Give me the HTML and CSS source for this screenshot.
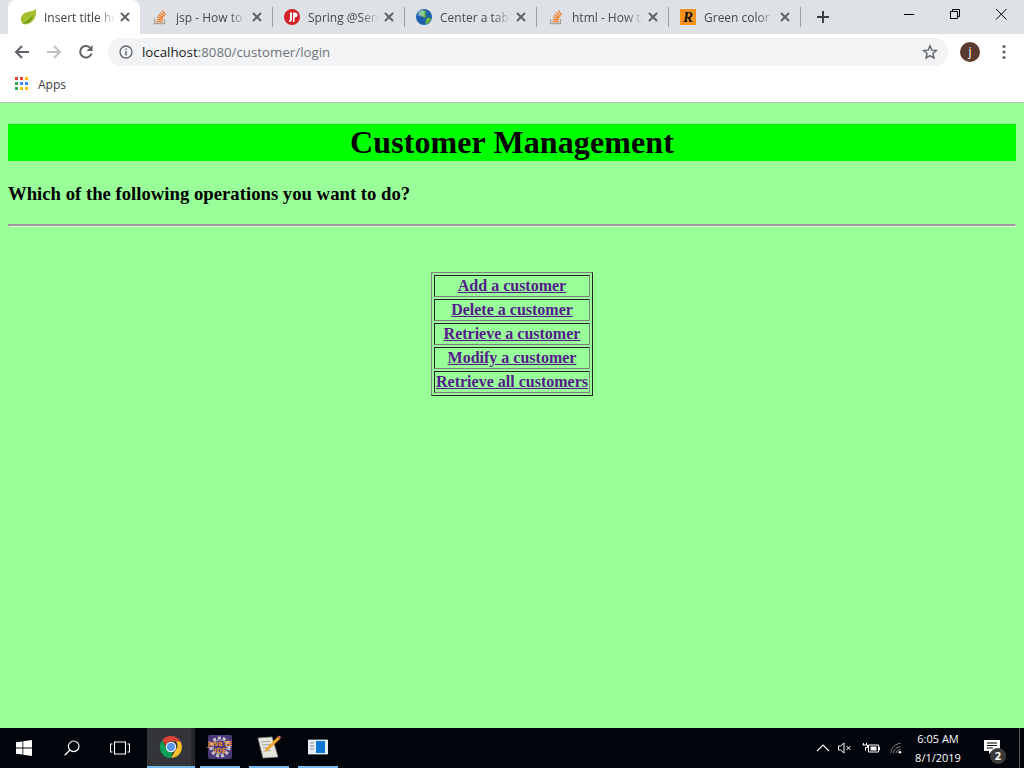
FILE: index.html
```html
<!DOCTYPE html>
<html lang="en">
<head>
    <meta charset="UTF-8">
    <title>Customer Management</title>
    <link rel="stylesheet" href="styles.css">
</head>
<body>
    <div class="window">
        <!-- Tab strip -->
        <div class="tabstrip">
            <div class="tab active">
                <svg class="favicon" viewBox="0 0 16 16"><path d="M3 15C0 12 0 7 4 4.500 8 2 13 3 16 0c.5 6-1 11-5 13.500C8 15.500 5 16 3 15z" fill="#a4c02c"/><path d="M3 14.500C6 12.500 9 11 13 6c-1 5-3 7-5 8-2 .8-3.500 1-5 .5z" fill="#6f9a1e"/></svg>
                <span class="tab-title">Insert title here</span>
                <svg class="tab-close" viewBox="0 0 12 12"><path d="M2 2l8 8M10 2l-8 8" stroke="#5f6368" stroke-width="2"/></svg>
            </div>
            <div class="tab">
                <svg class="favicon" viewBox="0 0 16 16"><path d="M2.500 10v4.500h10V10" fill="none" stroke="#a8a29a" stroke-width="1.300"/><path d="M4.500 12.500h6M4.700 10.300l6 .5M5.200 8l5.800 1.500M6.300 5.700l5.300 2.700M8 3.500l4.600 3.800M10.300 1.500l3.300 4.600" stroke="#ef8236" stroke-width="1.300"/></svg>
                <span class="tab-title">jsp - How to center</span>
                <svg class="tab-close" viewBox="0 0 12 12"><path d="M2 2l8 8M10 2l-8 8" stroke="#5f6368" stroke-width="2"/></svg>
            </div>
            <div class="tab">
                <svg class="favicon" viewBox="0 0 16 16"><circle cx="8" cy="8" r="8" fill="#d3232a"/><path d="M6 3.500h2v7c0 1.500-1 2.500-3 2.500v-1.700c.7 0 1-.3 1-1zM9 3.500h1.500c2 0 3 1 3 2.500s-1 2.500-3 2.500V13H9z" fill="#fff"/></svg>
                <span class="tab-title">Spring @Service</span>
                <svg class="tab-close" viewBox="0 0 12 12"><path d="M2 2l8 8M10 2l-8 8" stroke="#5f6368" stroke-width="2"/></svg>
            </div>
            <div class="tab">
                <svg class="favicon" viewBox="0 0 16 16"><circle cx="8" cy="8" r="8" fill="#1d5fa8"/><path d="M4 2.500c2-1.500 5-1.500 6 0 .5 1-1 1.500-1 2.500s1.500 1 1 2.500-2.500 1-3.500 0S3 6 3.500 4.500zM11 9c1.500-.5 3.500 0 4 1-.5 2.500-3 4.500-5 5-1-1-.5-2.500 0-3.500s0-2 1-2.500z" fill="#6fbb3c"/><circle cx="5" cy="4" r="3.500" fill="#bfe3f5" opacity=".45"/></svg>
                <span class="tab-title">Center a table</span>
                <svg class="tab-close" viewBox="0 0 12 12"><path d="M2 2l8 8M10 2l-8 8" stroke="#5f6368" stroke-width="2"/></svg>
            </div>
            <div class="tab">
                <svg class="favicon" viewBox="0 0 16 16"><path d="M2.500 10v4.500h10V10" fill="none" stroke="#a8a29a" stroke-width="1.300"/><path d="M4.500 12.500h6M4.700 10.300l6 .5M5.200 8l5.800 1.500M6.300 5.700l5.300 2.700M8 3.500l4.600 3.800M10.300 1.500l3.300 4.600" stroke="#ef8236" stroke-width="1.300"/></svg>
                <span class="tab-title">html - How to</span>
                <svg class="tab-close" viewBox="0 0 12 12"><path d="M2 2l8 8M10 2l-8 8" stroke="#5f6368" stroke-width="2"/></svg>
            </div>
            <div class="tab">
                <span class="favicon r-icon">R</span>
                <span class="tab-title">Green color codes</span>
                <svg class="tab-close" viewBox="0 0 12 12"><path d="M2 2l8 8M10 2l-8 8" stroke="#5f6368" stroke-width="2"/></svg>
            </div>
            <svg class="new-tab" viewBox="0 0 14 14"><path d="M7 1v12M1 7h12" stroke="#3c4043" stroke-width="2"/></svg>
            <div class="window-buttons">
                <svg class="win-btn" viewBox="0 0 46 20"><path d="M18 10.500h10" stroke="#000"/></svg>
                <svg class="win-btn" viewBox="0 0 46 20"><path d="M18.500 7.500h7v7h-7zM20.500 7.500v-2h7v7h-2" fill="none" stroke="#000"/></svg>
                <svg class="win-btn" viewBox="0 0 46 20"><path d="M18 5l10.500 10.500M28.500 5L18 15.500" stroke="#000"/></svg>
            </div>
        </div>

        <!-- Address bar -->
        <div class="toolbar">
            <svg class="nav-icon" viewBox="0 0 16 16"><path d="M15 8H2M8 2L2 8l6 6" fill="none" stroke="#5f6368" stroke-width="2"/></svg>
            <svg class="nav-icon" viewBox="0 0 16 16"><path d="M1 8h13M8 2l6 6-6 6" fill="none" stroke="#bdc1c6" stroke-width="2"/></svg>
            <svg class="nav-icon" viewBox="0 0 16 16"><path d="M13.500 9.500A5.800 5.800 0 1 1 12 3.600" fill="none" stroke="#5f6368" stroke-width="2"/><path d="M14.500 1v6h-6z" fill="#5f6368"/></svg>
            <div class="omnibox">
                <svg class="info-icon" viewBox="0 0 14 14"><circle cx="7" cy="7" r="6" fill="none" stroke="#5f6368" stroke-width="1.300"/><path d="M7 6v4.500M7 3.500v1.500" stroke="#5f6368" stroke-width="1.400"/></svg>
                <span class="url"><span class="url-host">localhost</span>:8080/customer/login</span>
                <svg class="star-icon" viewBox="0 0 16 16"><path d="M8 1.800l1.800 4.300 4.600.4-3.500 3 1.100 4.500L8 11.600 4 14l1.100-4.500-3.500-3 4.600-.4z" fill="none" stroke="#5f6368" stroke-width="1.400"/></svg>
            </div>
            <span class="avatar">j</span>
            <svg class="menu-icon" viewBox="0 0 4 16"><circle cx="2" cy="2.500" r="1.600" fill="#5f6368"/><circle cx="2" cy="8" r="1.600" fill="#5f6368"/><circle cx="2" cy="13.500" r="1.600" fill="#5f6368"/></svg>
        </div>

        <!-- Bookmarks -->
        <div class="bookmarks">
            <svg class="apps-icon" viewBox="0 0 14 14">
                <rect x="0" y="0" width="3" height="3" fill="#ea4335"/><rect x="5" y="0" width="3" height="3" fill="#ea4335"/><rect x="10" y="0" width="3" height="3" fill="#fbbc04"/>
                <rect x="0" y="5" width="3" height="3" fill="#34a853"/><rect x="5" y="5" width="3" height="3" fill="#4285f4"/><rect x="10" y="5" width="3" height="3" fill="#4285f4"/>
                <rect x="0" y="10" width="3" height="3" fill="#34a853"/><rect x="5" y="10" width="3" height="3" fill="#fbbc04"/><rect x="10" y="10" width="3" height="3" fill="#fbbc04"/>
            </svg>
            <span>Apps</span>
        </div>

        <!-- Page -->
        <div class="page">
            <h1>Customer Management</h1>
            <h3>Which of the following operations you want to do?</h3>
            <hr>
            <table class="menu">
                <tr><th><a href="#">Add a customer</a></th></tr>
                <tr><th><a href="#">Delete a customer</a></th></tr>
                <tr><th><a href="#">Retrieve a customer</a></th></tr>
                <tr><th><a href="#">Modify a customer</a></th></tr>
                <tr><th><a href="#">Retrieve all customers</a></th></tr>
            </table>
        </div>

        <!-- Taskbar -->
        <div class="taskbar">
            <svg class="start" viewBox="0 0 16 16"><path d="M0 2.300L6.500 1.400V7.600H0zM7.300 1.300L16 0V7.600H7.300zM0 8.400H6.500V14.600L0 13.700zM7.300 8.400H16V16L7.300 14.700z" fill="#fff"/></svg>
            <svg class="search" viewBox="0 0 16 16"><circle cx="9.700" cy="6.300" r="5.300" fill="none" stroke="#fff" stroke-width="1.200"/><path d="M6 10L.7 15.300" stroke="#fff" stroke-width="1.300"/></svg>
            <svg class="taskview" viewBox="0 0 20 14"><path d="M4.500 1h11v12h-11zM2.500 3H.5v8h2M17.500 3h2v8h-2" fill="none" stroke="#fff" stroke-width="1.100"/></svg>
            <div class="task task-active">
                <svg class="task-icon" viewBox="0 0 24 24">
                    <path d="M12 1a11 11 0 0 1 9.500 5.500H12a5.500 5.500 0 0 0-5.200 3.700L3.100 5.300A11 11 0 0 1 12 1z" fill="#db4437"/>
                    <path d="M21.500 6.500A11 11 0 0 1 12 23l4.700-8.300a5.500 5.500 0 0 0 0-8.200z" fill="#fbc02d"/>
                    <path d="M12 23A11 11 0 0 1 3.100 5.300L7.800 14a5.500 5.500 0 0 0 6 3.300z" fill="#0f9d58"/>
                    <circle cx="12" cy="12" r="5.200" fill="#fff"/><circle cx="12" cy="12" r="4.200" fill="#5a95ee"/>
                </svg>
            </div>
            <div class="task">
                <div class="eclipse-icon">
                    <svg class="eclipse-gear" viewBox="0 0 24 24"><circle cx="12" cy="12" r="9" fill="none" stroke="#c9c6cf" stroke-width="3" stroke-dasharray="3 2"/><circle cx="12" cy="12" r="7" fill="none" stroke="#a9a5b3"/></svg>
                    <span class="eclipse-label">Java EE</span>
                    <span class="eclipse-label">IDE</span>
                </div>
            </div>
            <div class="task">
                <svg class="task-icon" viewBox="0 0 24 24"><path d="M1 3l14-1 6 20-15 1z" fill="#e6e6e0" stroke="#8f8f88" stroke-width=".8"/><path d="M4 7l9-.6M5 10l8-.6M6 13l6-.5M6.500 16l7-.5" stroke="#a5a59c"/><path d="M8 17l2.500-1.200L23 4l-2-2.500L9 13.500z" fill="#f3a32c"/><path d="M21 1.500l2 2.500 1-1.500-1.500-2z" fill="#d9705f"/></svg>
            </div>
            <div class="task">
                <svg class="task-icon" viewBox="0 0 24 24"><rect x="2" y="4" width="20" height="16" fill="#e8edf2"/><path d="M2 4.500h20M2 19.500h20" stroke="#56606a"/><rect x="10" y="6" width="9" height="12" fill="#0f78d4"/><path d="M4 8h4M4 11h4M4 14h4" stroke="#9fb0bf" stroke-width="1.300"/></svg>
            </div>
            <div class="tray">
                <svg class="tray-icon" viewBox="0 0 14 8"><path d="M1 7l6-6 6 6" fill="none" stroke="#fff" stroke-width="1.100"/></svg>
                <svg class="tray-icon" viewBox="0 0 14 12"><path d="M.5 4h2L6 1v10L2.500 8h-2zM8.500 4l4 4M12.500 4l-4 4" fill="none" stroke="#fff"/></svg>
                <svg class="tray-icon tray-battery" viewBox="0 0 17 12"><path d="M6 3h10v7H6zM16 5h1v3h-1" fill="none" stroke="#fff"/><rect x="8" y="4.500" width="6" height="4" fill="#fff"/><path d="M1 1v2M4 1v2M0 3h5v2.500H3v3" fill="none" stroke="#fff"/></svg>
                <svg class="tray-icon" viewBox="0 0 14 14"><path d="M1 13C1.500 7 6 2 12.500 1.500M4 13c.5-4 3.500-7 8.500-7.500M7 13c.3-2 2-4 5.500-4.300" fill="none" stroke="#9a9a9a"/><circle cx="11.500" cy="12" r="1.500" fill="#fff"/></svg>
                <div class="clock"><span>6:05 AM</span><span>8/1/2019</span></div>
                <div class="notify">
                    <svg class="notify-icon" viewBox="0 0 16 14"><path d="M0 0h16v11H8l-3 3v-3H0z" fill="#fff"/><path d="M3 3h10M3 5.500h10M3 8h6" stroke="#000"/></svg>
                    <span class="badge">2</span>
                </div>
                <span class="show-desktop"></span>
            </div>
        </div>
    </div>
</body>
</html>
```

FILE: styles.css
```css
html, body {
    margin: 0;
    height: 100%;
}
body {
    font-family: "Open Sans", "Noto Sans", sans-serif;
    overflow: hidden;
}
.window {
    display: flex;
    flex-direction: column;
    height: 768px;
}

/* tabs */
.tabstrip {
    display: flex;
    align-items: center;
    height: 34px;
    padding-left: 8px;
    background-color: #dee1e6;
    flex: none;
}
.tab {
    position: relative;
    display: flex;
    align-items: center;
    width: 132px;
    height: 34px;
    padding-left: 12px;
    box-sizing: border-box;
    font-size: 12px;
    color: #45494d;
}
.tab::after {
    content: "";
    position: absolute;
    right: -1px;
    top: 7px;
    height: 20px;
    width: 1px;
    background-color: #9aa0a6;
}
.tab.active {
    background-color: #fff;
    border-radius: 8px 8px 0 0;
    color: #3c4043;
}
.tab.active::after {
    display: none;
}
.favicon {
    width: 16px;
    height: 16px;
    flex: none;
}
.r-icon {
    background-color: #f7931e;
    color: #111;
    font: italic bold 15px/16px "Liberation Serif", serif;
    text-align: center;
}
.tab-title {
    width: 71px;
    margin-left: 8px;
    overflow: hidden;
    white-space: nowrap;
    -webkit-mask-image: linear-gradient(to right, #000 75%, transparent 100%);
    mask-image: linear-gradient(to right, #000 75%, transparent 100%);
}
.tab-close {
    width: 12px;
    height: 12px;
    margin-left: 4px;
    flex: none;
}
.new-tab {
    width: 14px;
    height: 14px;
    margin-left: 16px;
}
.window-buttons {
    display: flex;
    margin-left: auto;
    align-self: flex-start;
    padding-top: 4px;
}
.win-btn {
    width: 46px;
    height: 20px;
}

/* address bar */
.toolbar {
    display: flex;
    align-items: center;
    height: 34px;
    padding: 2px 0 0 14px;
    box-sizing: border-box;
    flex: none;
}
.nav-icon {
    width: 16px;
    height: 16px;
    margin-right: 16px;
}
.omnibox {
    display: flex;
    align-items: center;
    width: 840px;
    height: 28px;
    margin-left: -2px;
    padding: 0 10px 0 11px;
    box-sizing: border-box;
    border-radius: 14px;
    background-color: #f1f3f4;
}
.info-icon {
    width: 14px;
    height: 14px;
}
.url {
    margin-left: 9px;
    font-size: 13.3px;
    color: #70757a;
}
.url-host {
    color: #202124;
}
.star-icon {
    width: 16px;
    height: 16px;
    margin-left: auto;
}
.avatar {
    width: 20px;
    height: 20px;
    margin-left: 12px;
    border-radius: 50%;
    background-color: #5b3a30;
    color: #fff;
    font-size: 12px;
    line-height: 19px;
    text-align: center;
}
.menu-icon {
    width: 4px;
    height: 16px;
    margin-left: 22px;
}

/* bookmarks */
.bookmarks {
    display: flex;
    align-items: center;
    height: 35px;
    padding: 0 0 2px 15px;
    box-sizing: border-box;
    border-bottom: 1px solid #b8b6b8;
    font-size: 12px;
    color: #3c4043;
    flex: none;
}
.apps-icon {
    width: 14px;
    height: 14px;
    margin-right: 9px;
}

/* page */
.page {
    flex: 1;
    padding: 8px;
    background-color: #9f9;
    color: #000;
    font-family: "Liberation Serif", serif;
}
h1 {
    margin: 13px 0 0;
    background-color: #0f0;
    text-align: center;
    letter-spacing: .1px;
}
h3 {
    margin: 22px 0 19px;
}
hr {
    height: 0;
    margin: 0 0 45px;
    border-style: solid;
    border-width: 2px 1px 1px;
    border-color: #9a9a9a #eee #eee #9a9a9a;
}
.menu {
    margin: 0 auto;
    border: 1px solid;
    border-color: #808080 #222 #222 #808080;
    border-spacing: 2px;
}
.menu th {
    padding: 1px;
    border: 1px solid;
    border-color: #222 #808080 #808080 #222;
}
.menu a {
    color: #551a8b;
}

/* taskbar */
.taskbar {
    display: flex;
    align-items: center;
    height: 40px;
    background-color: #01040a;
    flex: none;
}
.start {
    width: 16px;
    height: 16px;
    margin-left: 16px;
}
.search {
    width: 16px;
    height: 16px;
    margin-left: 32px;
}
.taskview {
    width: 20px;
    height: 14px;
    margin-left: 30px;
}
.task {
    display: flex;
    align-items: center;
    justify-content: center;
    width: 40px;
    height: 40px;
    margin-left: 9px;
    box-sizing: border-box;
    border-bottom: 2px solid #76b9ed;
}
.task-active {
    width: 48px;
    margin-left: 17px;
    margin-right: -4px;
    background-color: #333538;
    box-shadow: inset -4px 0 #26282b;
}
.task-icon {
    width: 24px;
    height: 24px;
}
.eclipse-icon {
    position: relative;
    display: flex;
    flex-direction: column;
    align-items: center;
    justify-content: center;
    width: 24px;
    height: 24px;
    border-radius: 2px;
    background-color: #4b3a78;
}
.eclipse-gear {
    position: absolute;
    left: 0;
    top: 0;
    width: 24px;
    height: 24px;
}
.eclipse-label {
    position: relative;
    color: #f0922c;
    font-size: 7px;
    font-weight: bold;
    line-height: 7px;
    white-space: nowrap;
}
.tray {
    display: flex;
    align-items: center;
    margin-left: auto;
    color: #fff;
}
.tray-icon {
    width: 14px;
    height: 12px;
    margin-right: 8px;
}
.tray-battery {
    width: 18px;
    margin: 0 9px 0 2px;
}
.clock {
    display: flex;
    flex-direction: column;
    align-items: center;
    width: 52px;
    margin: 0 17px 0 1px;
    font-size: 11px;
    line-height: 19px;
}
.notify {
    position: relative;
    width: 26px;
    height: 40px;
    margin-right: 12px;
}
.notify-icon {
    position: absolute;
    left: 3px;
    top: 12px;
    width: 16px;
    height: 14px;
}
.badge {
    position: absolute;
    left: 9px;
    top: 20px;
    width: 16px;
    height: 16px;
    border-radius: 50%;
    background-color: #3a3a3a;
    font-size: 11px;
    font-weight: bold;
    line-height: 16px;
    text-align: center;
}
.show-desktop {
    width: 1px;
    height: 40px;
    margin-right: 4px;
    background-color: #555;
}
```
